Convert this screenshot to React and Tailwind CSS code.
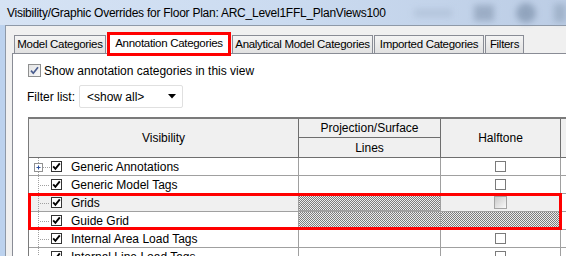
import React from "react";

function Check({ className = "" }) {
  return (
    <div className={"w-[11px] h-[11px] border border-[#333] bg-white flex items-center justify-center " + className}>
      <svg width="9" height="9" viewBox="0 0 9 9">
        <path d="M1.2 4.4 L3.4 6.8 L7.8 1.4" fill="none" stroke="#000" strokeWidth="1.9" />
      </svg>
    </div>
  );
}

function Tree({ plus }) {
  return (
    <svg width="22" height="18" viewBox="0 0 22 18" className="shrink-0">
      {plus ? (
        <>
          <line x1="9.5" y1="0" x2="9.5" y2="5" stroke="#a0a0a0" strokeDasharray="1 1" />
          <line x1="9.5" y1="14" x2="9.5" y2="18" stroke="#a0a0a0" strokeDasharray="1 1" />
          <rect x="5.5" y="5.5" width="8" height="8" fill="#fff" stroke="#919191" />
          <line x1="7.5" y1="9.5" x2="11.5" y2="9.5" stroke="#2a4f9c" />
          <line x1="9.5" y1="7.5" x2="9.5" y2="11.5" stroke="#2a4f9c" />
          <line x1="14" y1="9.5" x2="21" y2="9.5" stroke="#a0a0a0" strokeDasharray="1 1" />
        </>
      ) : (
        <>
          <line x1="9.5" y1="0" x2="9.5" y2="18" stroke="#a0a0a0" strokeDasharray="1 1" />
          <line x1="11" y1="9.5" x2="21" y2="9.5" stroke="#a0a0a0" strokeDasharray="1 1" />
        </>
      )}
    </svg>
  );
}

const hatch =
  "bg-[repeating-conic-gradient(#7c7c7c_0%_25%,#ececec_0%_50%)] bg-[length:2px_2px]";

function Row({ name, plus, variant }) {
  const sel = variant === "grids";
  const guide = variant === "guide";
  return (
    <div className="flex h-[18px] border-b border-[#a0a0a0]">
      <div className={"w-[270px] border-r border-[#a0a0a0] flex items-center whitespace-nowrap " + (sel ? "bg-[#f0f0f0]" : "bg-white")}>
        <Tree plus={plus} />
        <Check />
        <span className="ml-[9px] leading-none">{name}</span>
      </div>
      <div
        className={
          "w-[142px] border-r border-[#a0a0a0] " +
          (sel ? hatch + " border border-[#3399ff] ml-[-1px] w-[143px]" : guide ? hatch : "bg-white")
        }
      />
      <div
        className={
          "w-[120px] border-r border-[#a0a0a0] flex items-center justify-center " +
          (sel ? "bg-[#f0f0f0]" : guide ? hatch : "bg-white")
        }
      >
        {sel ? (
          <div className="w-[13px] h-[13px] border border-[#a4a4a4] bg-gradient-to-br from-[#c9c9c9] to-[#fafafa]" />
        ) : guide ? null : (
          <div className="w-[11px] h-[11px] border border-[#7a7a7a] bg-white" />
        )}
      </div>
      <div className="flex-1 bg-white" />
    </div>
  );
}

function Tab({ children, w, ml = "" }) {
  return (
    <div
      className={
        "h-[18px] shrink-0 whitespace-nowrap overflow-hidden text-[11.5px] tracking-[-0.3px] border border-b-0 border-[#898c95] bg-gradient-to-b from-[#f4f4f4] to-[#e1e1e1] flex items-center justify-center leading-none " +
        w +
        " " +
        ml
      }
    >
      {children}
    </div>
  );
}

export default function App() {
  return (
    <div className="w-[566px] h-[256px] overflow-hidden relative bg-[#f0f0f0] text-[12px] text-black font-['Liberation_Sans',Arial,sans-serif] flex flex-col">
      {/* Title bar */}
      <div className="h-[25px] shrink-0 flex items-center pl-[7px] bg-gradient-to-r from-[#d6e3f4] via-[#cbdbf0] to-[#bccde5] relative whitespace-nowrap">
        <span className="relative z-10 text-[12px] tracking-[-0.25px] leading-none">
          Visibility/Graphic Overrides for Floor Plan: ARC_Level1FFL_PlanViews100
        </span>
        <div className="ml-auto flex items-center h-full opacity-70">
          <div className="w-[38px] h-[8px] bg-[#aebfd6] blur-[3px] mr-[22px]" />
          <div className="w-[20px] h-[16px] bg-[#8d9fb8] blur-[3px] mr-[22px]" />
          <div className="w-[20px] h-[20px] rounded-full bg-[#7f93ad] blur-[3px] mr-[18px]" />
          <div className="w-[12px] h-[18px] bg-[#95a8c0] blur-[3px]" />
        </div>
      </div>

      <div className="flex flex-1 min-h-0">
        <div className="w-[5px] bg-[#bcd2ee] shrink-0" />
        <div className="flex-1 flex flex-col border-l border-t border-[#8e99a8] bg-[#f0f0f0]">
          {/* Tabs */}
          <div className="flex items-end h-[18px] mt-[9px] ml-[8px] shrink-0">
            <Tab w="w-[92px]">Model Categories</Tab>
            <div className="w-[124px] h-[24px] shrink-0 whitespace-nowrap text-[11.5px] tracking-[-0.3px] ml-[1px] mb-[-3px] relative z-10 border-[3px] border-[#ff0000] bg-white flex items-center justify-center leading-none">
              Annotation Categories
            </div>
            <Tab w="w-[141px]" ml="ml-[1px]">Analytical Model Categories</Tab>
            <Tab w="w-[110px]" ml="ml-[1px]">Imported Categories</Tab>
            <Tab w="w-[39px]" ml="ml-[1px]">Filters</Tab>
          </div>

          {/* Panel */}
          <div className="flex-1 ml-[6px] border-l border-t border-[#898c95] bg-white flex flex-col">
            <div className="flex items-center mt-[10px] ml-[15px] h-[13px] whitespace-nowrap">
              <div className="w-[13px] h-[13px] border border-[#8e8f8f] bg-gradient-to-br from-[#e4e4e4] to-[#f8f8f8] flex items-center justify-center">
                <svg width="9" height="9" viewBox="0 0 9 9">
                  <path d="M1 4.6 L3.3 7.2 L8 1.2" fill="none" stroke="#4a5d8f" strokeWidth="1.7" />
                </svg>
              </div>
              <span className="ml-[3px] leading-none">Show annotation categories in this view</span>
            </div>

            <div className="flex items-center mt-[8px] ml-[14px] h-[23px] whitespace-nowrap">
              <span className="w-[52px] leading-none">Filter list:</span>
              <div className="w-[104px] h-[23px] border border-[#e0e0e0] rounded-[2px] bg-white flex items-center pl-[7px] pr-[6px]">
                <span className="leading-none flex-1">&lt;show all&gt;</span>
                <svg width="8" height="5" viewBox="0 0 8 5">
                  <path d="M0 0 L8 0 L4 4.5 Z" fill="#000" />
                </svg>
              </div>
            </div>

            {/* Grid */}
            <div className="mt-[9px] ml-[15px] border-l border-t-2 border-[#7a7a7a] flex flex-col whitespace-nowrap">
              <div className="flex h-[39px] bg-[#f0f0f0] border-b border-[#6e6e6e]">
                <div className="w-[270px] border-r border-[#6e6e6e] flex items-center justify-center leading-none">
                  Visibility
                </div>
                <div className="w-[142px] border-r border-[#6e6e6e] flex flex-col">
                  <div className="h-[19px] border-b border-[#6e6e6e] flex items-center justify-center leading-none">
                    Projection/Surface
                  </div>
                  <div className="flex-1 flex items-center justify-center leading-none">Lines</div>
                </div>
                <div className="w-[120px] border-r border-[#6e6e6e] flex items-center justify-center leading-none">
                  Halftone
                </div>
                <div className="flex-1" />
              </div>
              <Row name="Generic Annotations" plus />
              <Row name="Generic Model Tags" />
              <Row name="Grids" variant="grids" />
              <Row name="Guide Grid" variant="guide" />
              <Row name="Internal Area Load Tags" />
              <Row name="Internal Line Load Tags" />
            </div>
          </div>
        </div>
      </div>

      {/* highlight box over Grids / Guide Grid */}
      <div className="absolute left-[28px] top-[193px] w-[534px] h-[37px] border-[3px] border-[#ff0000] pointer-events-none" />
    </div>
  );
}
